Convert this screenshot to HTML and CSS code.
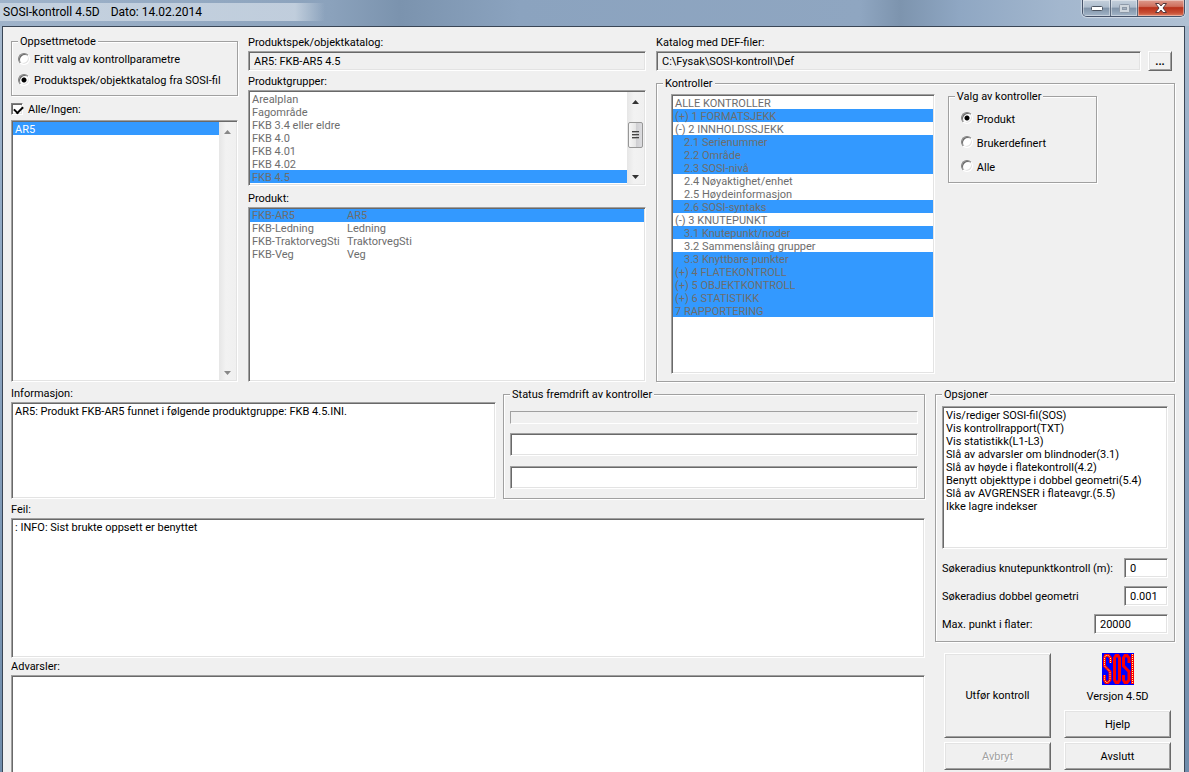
FILE: index.html
```html
<!DOCTYPE html>
<html lang="no">
<head>
<meta charset="utf-8">
<title>SOSI-kontroll 4.5D</title>
<link rel="stylesheet" href="styles.css">
</head>
<body>
<div class="window">
  <header class="titlebar">
    <h1 class="title"><span>SOSI-kontroll 4.5D</span><span>Dato: 14.02.2014</span></h1>
    <div class="caption-buttons">
      <button class="cap cap-min" type="button" aria-label="Minimer"><svg width="14" height="8" viewBox="0 0 14 8"><rect x="1.500" y="2.500" width="11" height="4" rx="1" fill="#fff" stroke="#4c5562"/></svg></button>
      <button class="cap cap-max" type="button" aria-label="Maksimer"><svg width="13" height="11" viewBox="0 0 13 11"><rect x="1.500" y="1.500" width="10" height="8" rx="1" fill="#cfd6dd" stroke="#8d99a8"/><rect x="4.500" y="4.500" width="4" height="2" fill="#a4b0be" stroke="#8d99a8"/></svg></button>
      <button class="cap cap-close" type="button" aria-label="Lukk"><svg width="14" height="12" viewBox="0 0 14 12"><path d="M1.500 1.500h3.500l2 2.500 2-2.500h3.500l-3.500 4.500 3.500 4.500h-3.500l-2-2.500-2 2.500h-3.500l3.500-4.500z" fill="#fff" stroke="#54383c"/></svg></button>
    </div>
  </header>
  <main class="client">
    <section class="top">
      <div class="col-setup">
        <fieldset class="group setup">
          <legend>Oppsettmetode</legend>
          <label class="choice"><input type="radio" name="metode">Fritt valg av kontrollparametre</label>
          <label class="choice"><input type="radio" name="metode" checked>Produktspek/objektkatalog fra SOSI-fil</label>
        </fieldset>
        <label class="choice all"><input type="checkbox" checked>Alle/Ingen:</label>
        <div class="listbox grow">
          <ul class="list" role="listbox" aria-label="Filer"><li class="sel-active" role="option" aria-selected="true">AR5</li></ul>
          <div class="scroll off">
            <svg class="arrow" width="9" height="5" viewBox="0 0 9 5"><path d="M1 5L4.500 1 8 5z"/></svg>
            <svg class="arrow" width="9" height="5" viewBox="0 0 9 5"><path d="M1 0L4.500 4 8 0z"/></svg>
          </div>
        </div>
      </div>
      <div class="col-product">
        <label class="caption" for="spek">Produktspek/objektkatalog:</label>
        <input class="field readonly" id="spek" type="text" value="AR5: FKB-AR5 4.5" readonly>
        <span class="caption" id="l-grp">Produktgrupper:</span>
        <div class="listbox groups">
          <ul class="list dim" role="listbox" aria-labelledby="l-grp">
            <li>Arealplan</li><li>Fagområde</li><li>FKB 3.4 eller eldre</li><li>FKB 4.0</li><li>FKB 4.01</li><li>FKB 4.02</li><li class="sel">FKB 4.5</li>
          </ul>
          <div class="scroll">
            <svg class="arrow" width="9" height="5" viewBox="0 0 9 5"><path d="M1 5L4.500 1 8 5z"/></svg>
            <div class="thumb"><i></i><i></i><i></i></div>
            <svg class="arrow" width="9" height="5" viewBox="0 0 9 5"><path d="M1 0L4.500 4 8 0z"/></svg>
          </div>
        </div>
        <span class="caption" id="l-prod">Produkt:</span>
        <div class="listbox grow">
          <table class="list dim products" aria-labelledby="l-prod">
            <tr class="sel"><td>FKB-AR5</td><td>AR5</td></tr>
            <tr><td>FKB-Ledning</td><td>Ledning</td></tr>
            <tr><td>FKB-TraktorvegSti</td><td>TraktorvegSti</td></tr>
            <tr><td>FKB-Veg</td><td>Veg</td></tr>
          </table>
        </div>
      </div>
      <div class="col-checks">
        <label class="caption" for="def">Katalog med DEF-filer:</label>
        <div class="path"><input class="field readonly" id="def" type="text" value="C:\Fysak\SOSI-kontroll\Def" readonly><button class="btn browse" type="button">...</button></div>
        <fieldset class="group checks">
          <legend>Kontroller</legend>
          <div class="checks-body">
            <div class="listbox checklist">
              <ul class="list dim" role="listbox" aria-label="Kontroller">
                <li>ALLE KONTROLLER</li>
                <li class="sel">(+) 1 FORMATSJEKK</li>
                <li>(-) 2 INNHOLDSSJEKK</li>
                <li class="sel sub">2.1 Serienummer</li>
                <li class="sel sub">2.2 Område</li>
                <li class="sel sub">2.3 SOSI-nivå</li>
                <li class="sub">2.4 Nøyaktighet/enhet</li>
                <li class="sub">2.5 Høydeinformasjon</li>
                <li class="sel sub">2.6 SOSI-syntaks</li>
                <li>(-) 3 KNUTEPUNKT</li>
                <li class="sel sub">3.1 Knutepunkt/noder</li>
                <li class="sub">3.2 Sammenslåing grupper</li>
                <li class="sel sub">3.3 Knyttbare punkter</li>
                <li class="sel">(+) 4 FLATEKONTROLL</li>
                <li class="sel">(+) 5 OBJEKTKONTROLL</li>
                <li class="sel">(+) 6 STATISTIKK</li>
                <li class="sel">7 RAPPORTERING</li>
              </ul>
            </div>
            <fieldset class="group choose">
              <legend>Valg av kontroller</legend>
              <label class="choice"><input type="radio" name="valg" checked>Produkt</label>
              <label class="choice"><input type="radio" name="valg">Brukerdefinert</label>
              <label class="choice"><input type="radio" name="valg">Alle</label>
            </fieldset>
          </div>
        </fieldset>
      </div>
    </section>
    <section class="bottom">
      <div class="messages">
        <div class="info-row">
          <div class="info">
            <label class="caption" for="info">Informasjon:</label>
            <textarea class="field grow" id="info">AR5: Produkt FKB-AR5 funnet i følgende produktgruppe: FKB 4.5.INI.</textarea>
          </div>
          <fieldset class="group status">
            <legend>Status fremdrift av kontroller</legend>
            <div class="progress" role="progressbar" aria-label="Fremdrift"></div>
            <input class="field" type="text" aria-label="Status 1">
            <input class="field" type="text" aria-label="Status 2">
          </fieldset>
        </div>
        <label class="caption" for="feil">Feil:</label>
        <textarea class="field errors" id="feil">: INFO: Sist brukte oppsett er benyttet</textarea>
        <label class="caption" for="adv">Advarsler:</label>
        <textarea class="field warnings" id="adv"></textarea>
      </div>
      <aside class="side">
        <fieldset class="group options">
          <legend>Opsjoner</legend>
          <div class="listbox optlist">
            <ul class="list" role="listbox" aria-label="Opsjoner">
              <li>Vis/rediger SOSI-fil(SOS)</li><li>Vis kontrollrapport(TXT)</li><li>Vis statistikk(L1-L3)</li><li>Slå av advarsler om blindnoder(3.1)</li><li>Slå av høyde i flatekontroll(4.2)</li><li>Benytt objekttype i dobbel geometri(5.4)</li><li>Slå av AVGRENSER i flateavgr.(5.5)</li><li>Ikke lagre indekser</li>
            </ul>
          </div>
          <div class="param"><label for="p1">Søkeradius knutepunktkontroll (m):</label><input class="field short" id="p1" type="text" value="0"></div>
          <div class="param"><label for="p2">Søkeradius dobbel geometri</label><input class="field short" id="p2" type="text" value="0.001"></div>
          <div class="param"><label for="p3">Max. punkt i flater:</label><input class="field long" id="p3" type="text" value="20000"></div>
        </fieldset>
        <div class="actions">
          <button class="btn run" type="button">Utfør kontroll</button>
          <div class="about">
            <svg class="logo" role="img" aria-label="SOSI" width="32" height="32" viewBox="0 0 32 32">
              <rect width="32" height="32" fill="#00f"/>
              <g fill="none" stroke="#f00" stroke-width="3">
                <path d="M8.500 10V5L6.500 2.500h-3L2.500 5v8L8 18.500V27L6 29.500H4L2.500 27v-5"/>
                <path d="M12.500 5l1.500-2.500h2L17.500 5v22l-1.500 2.500h-2L12.500 27z"/>
                <path d="M27 10V5l-2-2.500h-2L21.500 5v8l5.500 5.500V27l-2 2.500h-2L21.500 27v-5"/>
                <path d="M30.500 1v30"/>
              </g>
              <g fill="none" stroke="#ff9" stroke-width="1" stroke-dasharray="1 1">
                <path d="M8.500 10V5L6.500 2.500h-3L2.500 5v8L8 18.500V27L6 29.500H4L2.500 27v-5"/>
                <path d="M30.500 1v30"/>
              </g>
            </svg>
            <span>Versjon 4.5D</span>
          </div>
          <button class="btn help" type="button">Hjelp</button>
          <button class="btn" type="button" disabled>Avbryt</button>
          <button class="btn" type="button">Avslutt</button>
        </div>
      </aside>
    </section>
  </main>
</div>
</body>
</html>
```
FILE: styles.css
```css
* { box-sizing: border-box; }
html, body { height: 100%; }
body, button, input, textarea {
  font: 11px/13px Roboto, "Noto Sans", sans-serif;
  color: #000;
}
body { margin: 0; overflow: hidden; background: #8ea6c2; }
ul { list-style: none; margin: 0; padding: 0; }

.window { height: 100vh; display: flex; flex-direction: column; background: linear-gradient(#a9bbcf, #93abc6 200px, #6f8cab); }
.titlebar {
  flex: none; height: 26px; display: flex; justify-content: space-between; align-items: flex-start;
  background:
    linear-gradient(90deg, rgba(205,216,228,.8), rgba(205,216,228,.8) 295px, rgba(205,216,228,0) 325px) 0 3px / 100% 18px no-repeat,
    linear-gradient(90deg, #9fb3ca 0, #8ba2bc 330px, #7b93ae 400px, #8ba3bf 520px, #8fa6c1 860px, #7d94ae 900px, #8fa7c3 960px, #a3b7ce 1060px, #b0c1d4);
}
.title { margin: 0; padding: 4px 3px; display: flex; gap: 11px; font-size: 12px; line-height: 16px; font-weight: 400; }
.caption-buttons { display: flex; margin-right: 4px; height: 17px; border: 1px solid #46536a; border-top: 0; border-radius: 0 0 5px 5px; overflow: hidden; box-shadow: 0 0 1px 1px rgba(255,255,255,.45); }
.cap { display: flex; align-items: center; justify-content: center; padding: 0; border: 0; border-right: 1px solid #5d6b7f; background: linear-gradient(#c5d0dc, #aebdcd 45%, #8093a8 50%, #a3b5c8); box-shadow: inset 0 0 0 1px rgba(255,255,255,.4); }
.cap-min { width: 28px; }
.cap-max { width: 27px; }
.cap-close { width: 46px; border-right: 0; background: linear-gradient(#dd9b8d, #cf6f5d 40%, #b8301a 48%, #c84f35 80%, #dd8064); }

.client {
  flex: 1; min-height: 0; overflow: hidden; margin: 0 4px 0 2px; padding: 8px 9px 0 8px;
  border: solid #3a4656; border-width: 1px 1px 0; background: #f0f0f0;
  display: flex; flex-direction: column; gap: 4px;
}
.top { flex: none; height: 347px; display: flex; gap: 10px; }
.col-setup, .col-product, .col-checks, .messages, .info, .side { display: flex; flex-direction: column; min-width: 0; }
.col-setup { flex: 227 1 0; }
.col-product { flex: 398 1 0; }
.col-checks { flex: 519 1 0; }
.grow { flex: 1; min-height: 0; }

.caption { display: block; flex: none; height: 16px; line-height: 16px; }
.group { min-width: 0; margin: 0; padding: 0; border: 1px solid #a0a0a0; box-shadow: 1px 1px 0 #fff, inset 1px 1px 0 #fff; }
.group legend { margin-left: 6px; padding: 0 2px; height: 13px; line-height: 14px; background: #f0f0f0; }

.field, .listbox {
  border: 1px solid; border-color: #a0a0a0 #fff #fff #a0a0a0;
  box-shadow: inset 1px 1px 0 #696969, inset -1px -1px 0 #e3e3e3;
  background: #fff; border-radius: 0; outline: 0;
}
.field { display: block; width: 100%; flex: none; margin: 0; padding: 1px 5px; resize: none; }
input.field { height: 20px; }
textarea.field { padding: 2px 3px; overflow: hidden; }
textarea.grow { flex: 1; }
.field.readonly { background: #f0f0f0; }
.listbox { display: flex; padding: 1px; overflow: hidden; }
.list { flex: 1; min-width: 0; line-height: 13px; }
.list li { height: 13px; line-height: 15px; padding-left: 2px; white-space: nowrap; }
.list .sub { padding-left: 11px; }
.dim { color: #6d6d6d; }
.sel, .sel-active { background: #39f; }
.sel-active { color: #fff; }

.scroll { flex: none; width: 17px; padding: 7px 0 4px; display: flex; flex-direction: column; align-items: center; justify-content: space-between; background: linear-gradient(90deg, #e6e6e6, #f2f2f2 40%, #f0f0f0); }
.arrow { fill: #333; }
.off .arrow { fill: #888; }
.thumb { width: 15px; height: 26px; margin-bottom: 9px; display: flex; flex-direction: column; align-items: center; justify-content: center; gap: 1px; border: 1px solid #979797; border-radius: 2px; background: linear-gradient(90deg, #f6f6f6, #e6e6e6 50%, #cfcfd2 55%, #dcdcdf); }
.thumb i { width: 7px; height: 2px; border-bottom: 1px solid #aaa; background: #444; }

.choice { display: flex; align-items: center; gap: 4px; white-space: nowrap; }
.choice input { appearance: none; flex: none; width: 12px; height: 12px; margin: 0 0 2px; background: #fff; border: 1px solid; border-color: #808080 #fff #fff #808080; box-shadow: inset 1px 1px 0 #696969, inset -1px -1px 0 #e3e3e3; }
.choice input[type=radio] { border-radius: 50%; }
.choice input[type=radio]:checked { background: radial-gradient(circle, #000 0 2px, #fff 3px); }
.choice input[type=checkbox]:checked::before { content: ""; display: block; width: 7px; height: 4px; margin: 2px 0 0 2px; border: solid #000; border-width: 0 0 2px 2px; transform: rotate(-45deg); }

.setup { flex: none; height: 61px; padding-top: 1px; }
.setup .choice { height: 21px; padding-left: 6px; }
.all { flex: none; height: 24px; gap: 5px; padding-top: 3px; }
.groups { flex: none; height: 96px; margin-bottom: 5px; }
.col-product .field { margin-bottom: 3px; }
.products { border-collapse: collapse; align-self: flex-start; }
.products td { height: 13px; padding: 0 0 0 2px; }
.products td:first-child { width: 95px; }

.path { display: flex; gap: 7px; padding-right: 3px; }
.path .field { flex: 1; min-width: 0; }
.btn { padding: 0; border: 1px solid; border-color: #fff #696969 #696969 #fff; box-shadow: inset 1px 1px 0 #e3e3e3, inset -1px -1px 0 #a0a0a0; background: #f0f0f0; border-radius: 0; }
.btn:disabled { color: #a0a0a0; text-shadow: 1px 1px 0 #fff; }
.browse { flex: none; width: 24px; height: 20px; font-weight: 700; }
.checks { flex: 1; margin-top: 6px; }
.checks-body { display: flex; gap: 13px; align-items: flex-start; padding: 0 77px 0 14px; }
.checklist { flex: 263 1 0; min-width: 0; height: 280px; margin-top: 4px; }
.choose { flex: 149 1 0; padding-top: 4px; height: 93px; }
.choose .choice { height: 24px; padding-left: 12px; }

.bottom { flex: 1; min-height: 0; display: flex; gap: 10px; }
.messages { flex: 914 1 0; }
.side { flex: 240 1 0; padding-top: 2px; }
.info-row { flex: none; height: 113px; display: flex; gap: 7px; margin-bottom: 3px; }
.info { flex: 485 1 0; }
.status { flex: 408 1 0; margin-top: 2px; padding: 0 6px; }
.status legend, .options legend { margin-left: 0; }
.status .field { height: 23px; margin-bottom: 10px; }
.progress { height: 13px; margin: 10px 0 9px; border: 1px solid; border-color: #a0a0a0 #fff #fff #a0a0a0; }
.errors { height: 140px; margin-bottom: 1px; }
.warnings { height: 140px; }

.options { flex: none; padding: 0 6px 7px; }
.optlist { height: 143px; margin: 5px 0 9px; }
.param { display: flex; align-items: center; justify-content: space-between; height: 20px; margin-bottom: 8px; white-space: nowrap; }
.param:last-child { margin-bottom: 0; }
.param .field { padding: 1px 5px; }
.param .short { width: 44px; }
.param .long { width: 74px; }
.actions { display: grid; grid-template-columns: 1fr 1fr; grid-template-rows: 53px 28px 28px; gap: 4px 13px; padding: 11px 4px 0 9px; }
.run { grid-row: span 2; }
.about { display: flex; flex-direction: column; align-items: center; gap: 5px; }
.logo { flex: none; }
```
